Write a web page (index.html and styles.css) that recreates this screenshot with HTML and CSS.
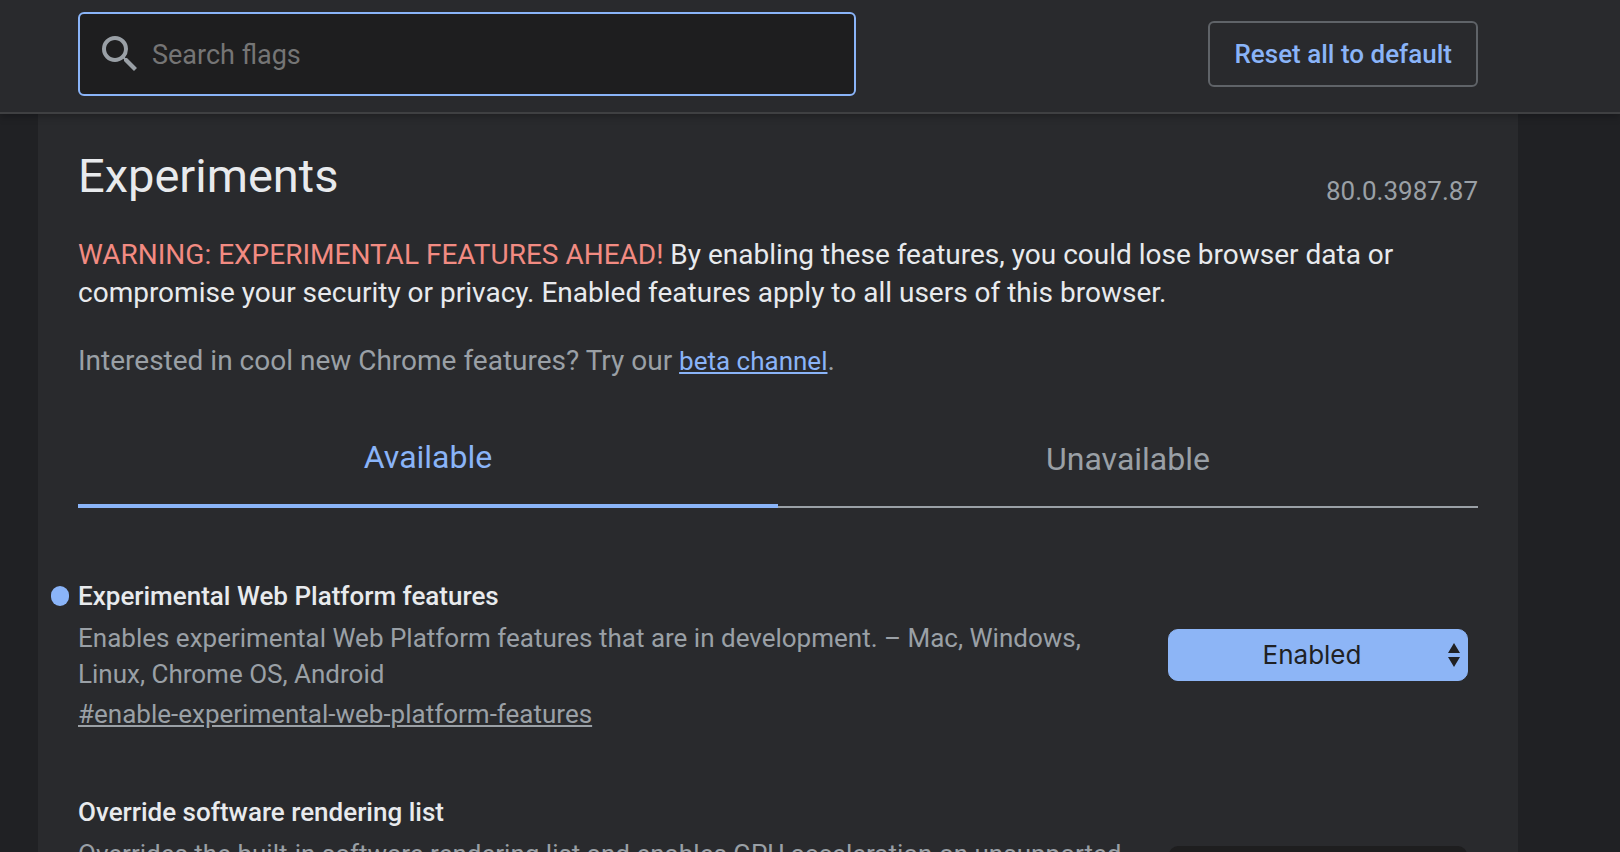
FILE: index.html
```html
<!DOCTYPE html>
<html lang="en">
<head>
<meta charset="utf-8">
<meta name="viewport" content="width=device-width, initial-scale=1">
<title>Experiments</title>
<link rel="stylesheet" href="styles.css">
</head>
<body>
<div class="app">
  <header class="toolbar">
    <label class="search">
      <svg class="search-icon" viewBox="0 0 24 24" aria-hidden="true"><path d="M15.5 14h-.79l-.28-.27A6.471 6.471 0 0 0 16 9.5 6.5 6.5 0 1 0 9.5 16c1.61 0 3.09-.59 4.23-1.57l.27.28v.79l5 4.99L20.49 19l-4.99-5zm-6 0C7.01 14 5 11.99 5 9.5S7.01 5 9.5 5 14 7.01 14 9.5 11.99 14 9.5 14z"/></svg>
      <input class="search-input" type="text" placeholder="Search flags" aria-label="Search flags">
    </label>
    <button class="reset" type="button">Reset all to default</button>
  </header>
  <div class="scroller">
    <main class="panel">
      <div class="heading">
        <h1 class="title">Experiments</h1>
        <span class="version">80.0.3987.87</span>
      </div>
      <p class="blurb"><span class="warning">WARNING: EXPERIMENTAL FEATURES AHEAD!</span> By enabling these features, you could lose browser data or compromise your security or privacy. Enabled features apply to all users of this browser.</p>
      <p class="promo">Interested in cool new Chrome features? Try our <a class="promo-link" href="#beta">beta channel</a>.</p>
      <div class="tabs" role="tablist">
        <button class="tab selected" type="button" role="tab" aria-selected="true">Available</button>
        <button class="tab" type="button" role="tab" aria-selected="false">Unavailable</button>
      </div>
      <section class="flag changed">
        <div class="flag-text">
          <h2 class="flag-name" id="web-platform">Experimental Web Platform features</h2>
          <p class="flag-desc">Enables experimental Web Platform features that are in development. – Mac, Windows, Linux, Chrome OS, Android</p>
          <a class="permalink" href="#enable-experimental-web-platform-features">#enable-experimental-web-platform-features</a>
        </div>
        <div class="picker">
          <select class="choice" aria-labelledby="web-platform"><option>Default</option><option selected>Enabled</option><option>Disabled</option></select>
          <svg class="arrows" viewBox="0 0 12 24" aria-hidden="true"><path d="M0 10 6 0l6 10zM0 14h12L6 24z"/></svg>
        </div>
      </section>
      <section class="flag">
        <div class="flag-text">
          <h2 class="flag-name" id="software-list">Override software rendering list</h2>
          <p class="flag-desc">Overrides the built-in software rendering list and enables GPU acceleration on unsupported system configurations. – Mac, Windows, Linux, Chrome OS, Android</p>
          <a class="permalink" href="#ignore-gpu-blacklist">#ignore-gpu-blacklist</a>
        </div>
        <div class="picker">
          <select class="choice" aria-labelledby="software-list"><option>Disabled</option><option>Enabled</option></select>
          <svg class="arrows" viewBox="0 0 12 24" aria-hidden="true"><path d="M0 10 6 0l6 10zM0 14h12L6 24z"/></svg>
        </div>
      </section>
    </main>
  </div>
</div>
</body>
</html>
```
FILE: styles.css
```css
* { box-sizing: border-box; }

body {
  margin: 0;
  background: #202124;
  color: #e8eaed;
  font: 26px/36px Roboto, "Liberation Sans", sans-serif;
}

h1, h2, p { margin: 0; }

button, input, select { font: inherit; }

.app {
  display: flex;
  flex-direction: column;
  height: 100vh;
}

.toolbar {
  position: relative;
  display: flex;
  flex: none;
  align-items: center;
  justify-content: space-between;
  gap: 40px;
  padding: 12px 142px 16px 78px;
  background: #292a2d;
  border-bottom: 2px solid #3f4042;
  box-shadow: 0 2px 8px rgba(0, 0, 0, 0.3);
}

.search {
  display: flex;
  flex: 1;
  align-items: center;
  gap: 8px;
  max-width: 778px;
  height: 84px;
  padding: 0 16px;
  background: #1e1e1f;
  border: 2px solid #8ab4f8;
  border-radius: 6px;
}

.search-icon {
  flex: none;
  width: 48px;
  height: 48px;
  fill: #9aa0a6;
}

.search-input {
  flex: 1;
  min-width: 0;
  padding: 2px 0 0;
  background: none;
  border: 0;
  outline: 0;
  color: #e8eaed;
  font-size: 27px;
}

.search-input::placeholder { color: #757575; opacity: 1; }

.reset {
  height: 66px;
  padding: 0 24px;
  background: none;
  border: 2px solid #5f6368;
  border-radius: 6px;
  color: #8ab4f8;
  font-weight: 500;
}

.scroller {
  flex: 1;
  min-height: 0;
  padding: 0 102px 0 38px;
  overflow-y: auto;
  scrollbar-width: none;
}

.panel {
  padding: 32px 40px;
  background: #292a2d;
}

.heading {
  display: flex;
  align-items: flex-end;
  justify-content: space-between;
  margin-bottom: 30px;
}

.title { font-size: 47px; font-weight: 400; line-height: 60px; }

.version { color: #9aa0a6; line-height: 30px; }

.blurb, .promo { font-size: 28px; line-height: 38px; }

.blurb { margin-bottom: 30px; }

.warning { color: #f28b82; }

.promo { color: #9aa0a6; }

.promo-link { color: #8ab4f8; font-size: 26px; }

.tabs {
  display: flex;
  align-items: flex-end;
  margin: 38px 0 70px;
}

.tab {
  flex: 1;
  padding: 20px 0 28px;
  background: none;
  border: 0;
  border-bottom: 2px solid #9aa0a6;
  color: #9aa0a6;
  font-size: 32px;
  line-height: 38px;
}

.tab.selected { border-bottom: 4px solid #8ab4f8; color: #8ab4f8; }

.flag {
  position: relative;
  display: flex;
  align-items: center;
  gap: 30px;
  margin-bottom: 62px;
  padding-right: 10px;
}

.flag.changed::before {
  content: "";
  position: absolute;
  top: 8px;
  left: -27px;
  width: 18px;
  height: 20px;
  background: #8ab4f8;
  border-radius: 9px;
}

.flag-text { flex: 1; }

.flag-name { font-size: 26px; font-weight: 500; }

.flag-desc { margin: 6px 0 4px; color: #9aa0a6; }

.permalink { display: block; color: #9aa0a6; }

.picker { position: relative; flex: none; width: 300px; }

.choice {
  display: block;
  width: 100%;
  height: 52px;
  padding: 0 28px 0 16px;
  appearance: none;
  background: #1e1e1f;
  background-clip: padding-box;
  border: 1px solid transparent;
  border-radius: 10px;
  color: #e8eaed;
  font-family: Inter, "Liberation Sans", sans-serif;
  text-align-last: center;
}

.arrows {
  position: absolute;
  top: 14px;
  right: 8px;
  width: 12px;
  height: 24px;
  fill: #e8eaed;
  pointer-events: none;
}

.changed .choice { background: #8db5f6; border-color: #8db5f6; color: #202124; }

.changed .arrows { fill: #202124; }
```
